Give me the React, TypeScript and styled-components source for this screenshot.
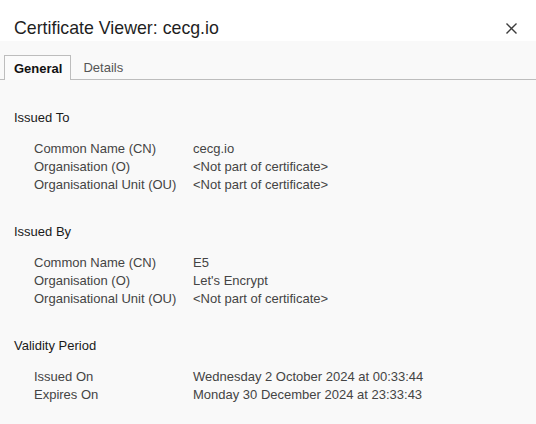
import React from "react";
import styled, { createGlobalStyle } from "styled-components";

const Global = createGlobalStyle`
  html, body { margin: 0; padding: 0; background: #f9f9f9; }
  body { font-family: "Liberation Sans", Arial, sans-serif; -webkit-font-smoothing: antialiased; }
`;

const Dialog = styled.div`
  width: 536px;
  height: 424px;
  display: flex;
  flex-direction: column;
  background: #f9f9f9;
  overflow: hidden;
  & > * { flex-shrink: 0; }
`;

const Header = styled.div`
  height: 41px;
  background: #ffffff;
  display: flex;
  align-items: center;
  justify-content: space-between;
  padding: 0 18px 0 14px;
  box-sizing: border-box;
`;

const Title = styled.h1`
  margin: 0;
  padding-top: 16px;
  font-size: 17.75px;
  font-weight: 400;
  color: #1f1f1f;
`;

const Close = styled.button`
  border: none;
  background: none;
  padding: 0;
  margin-top: 15px;
  width: 14px;
  height: 14px;
  display: flex;
  align-items: center;
  justify-content: center;
  cursor: pointer;
`;

const TabBar = styled.div`
  margin-top: 14px;
  display: flex;
  padding-left: 4px;
  border-bottom: 1px solid #bdbdbd;
  height: 24px;
`;

const Tab = styled.div<{ $active?: boolean }>`
  box-sizing: border-box;
  padding: ${(p) => (p.$active ? "0 8px 0 9px" : "0 10px 0 11px")};
  display: flex;
  align-items: center;
  font-size: 13px;
  color: ${(p) => (p.$active ? "#111" : "#555")};
  font-weight: ${(p) => (p.$active ? 700 : 400)};
  border: 1px solid ${(p) => (p.$active ? "#bdbdbd" : "transparent")};
  border-bottom: none;
  background: ${(p) => (p.$active ? "#fbfbfb" : "transparent")};
  margin-bottom: ${(p) => (p.$active ? "-1px" : "0")};
  height: ${(p) => (p.$active ? "25px" : "24px")};
`;

const Content = styled.div`
  padding: 30px 14px 0 14px;
  display: flex;
  flex-direction: column;
`;

const Section = styled.section`
  display: flex;
  flex-direction: column;
  margin-bottom: 30px;
`;

const Heading = styled.div`
  font-size: 13px;
  color: #1a1a1a;
  line-height: 15px;
  margin-bottom: 15px;
`;

const Row = styled.div`
  display: grid;
  grid-template-columns: 159px 1fr;
  padding-left: 20px;
  font-size: 13px;
  line-height: 18px;
  color: #444;
`;

const sections: { title: string; rows: [string, string][] }[] = [
  {
    title: "Issued To",
    rows: [
      ["Common Name (CN)", "cecg.io"],
      ["Organisation (O)", "<Not part of certificate>"],
      ["Organisational Unit (OU)", "<Not part of certificate>"],
    ],
  },
  {
    title: "Issued By",
    rows: [
      ["Common Name (CN)", "E5"],
      ["Organisation (O)", "Let's Encrypt"],
      ["Organisational Unit (OU)", "<Not part of certificate>"],
    ],
  },
  {
    title: "Validity Period",
    rows: [
      ["Issued On", "Wednesday 2 October 2024 at 00:33:44"],
      ["Expires On", "Monday 30 December 2024 at 23:33:43"],
    ],
  },
];

export default function App() {
  return (
    <Dialog>
      <Global />
      <Header>
        <Title>Certificate Viewer: cecg.io</Title>
        <Close aria-label="Close">
          <svg width="11" height="11" viewBox="0 0 11 11">
            <path d="M0.5 0.5 L10.5 10.5 M10.5 0.5 L0.5 10.5" stroke="#3c3c3c" strokeWidth="1.4" />
          </svg>
        </Close>
      </Header>
      <TabBar>
        <Tab $active>General</Tab>
        <Tab>Details</Tab>
      </TabBar>
      <Content>
        {sections.map((s) => (
          <Section key={s.title}>
            <Heading>{s.title}</Heading>
            {s.rows.map(([k, v]) => (
              <Row key={k}>
                <span>{k}</span>
                <span>{v}</span>
              </Row>
            ))}
          </Section>
        ))}
      </Content>
    </Dialog>
  );
}
